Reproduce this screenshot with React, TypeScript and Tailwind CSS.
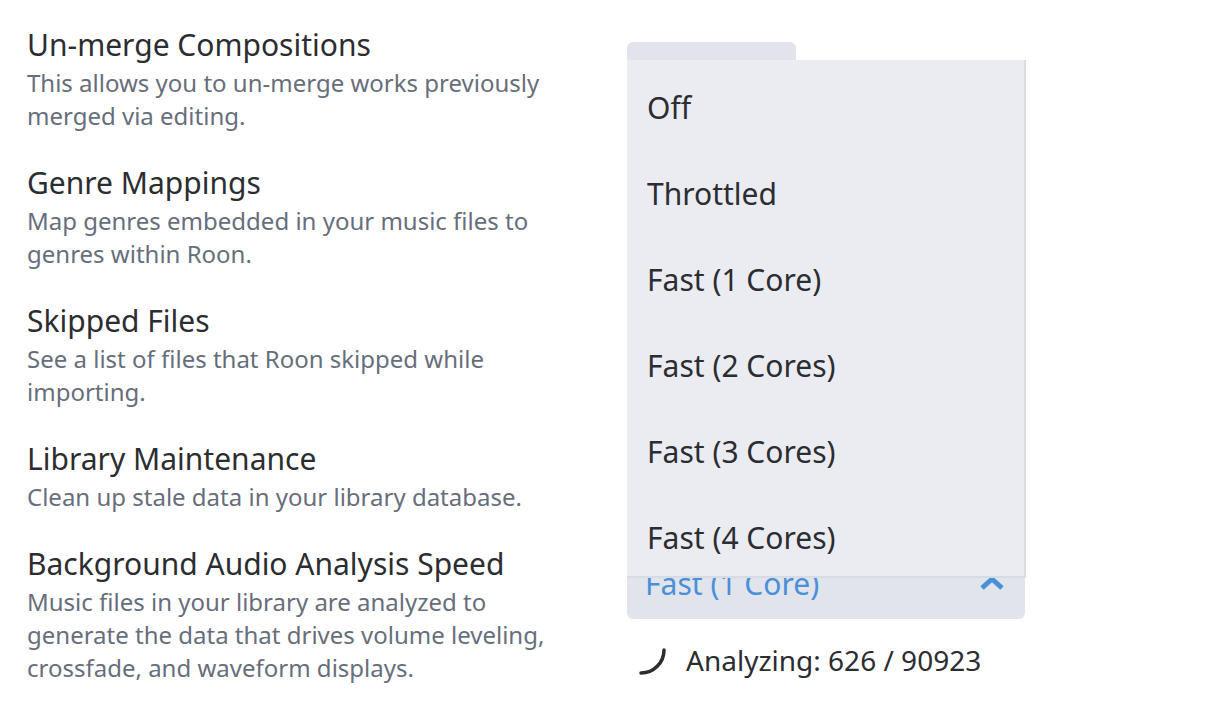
const SECTIONS: { title: string; desc: string }[] = [
  { title: "Un-merge Compositions", desc: "This allows you to un-merge works previously merged via editing." },
  { title: "Genre Mappings", desc: "Map genres embedded in your music files to genres within Roon." },
  { title: "Skipped Files", desc: "See a list of files that Roon skipped while importing." },
  { title: "Library Maintenance", desc: "Clean up stale data in your library database." },
  {
    title: "Background Audio Analysis Speed",
    desc: "Music files in your library are analyzed to generate the data that drives volume leveling, crossfade, and waveform displays.",
  },
];

const OPTIONS = ["Off", "Throttled", "Fast (1 Core)", "Fast (2 Cores)", "Fast (3 Cores)", "Fast (4 Cores)"];

export default function App() {
  return (
    <div
      className="relative w-[1206px] h-[718px] overflow-hidden bg-white"
      style={{ fontFamily: '"Noto Sans", "Open Sans", sans-serif' }}
    >
      <div className="pl-[27px] pt-[26px] flex flex-col gap-[32px]">
        {SECTIONS.map((s, i) => (
          <div key={s.title} className="grid grid-cols-[600px_398px]">
            <div className="w-[530px]">
              <div className="text-[30px] leading-[38px] text-[#2b2d31]">{s.title}</div>
              <div className="mt-[2px] text-[24px] leading-[33px] text-[#676e7b]">{s.desc}</div>
            </div>
            <div>
              {i === 0 && <div className="mt-[16px] w-[169px] h-[40px] rounded-[6px] bg-[#e1e4eb]" />}
              {i === 4 && (
                <>
                  <div className="mt-[2px] h-[72px] rounded-[6px] bg-[#e1e4eb] flex items-center justify-between pl-[18px] pr-[20px]">
                    <span className="text-[30px] text-[#4a90d9]">Fast (1 Core)</span>
                    <svg width="26" height="16" viewBox="0 0 26 16">
                      <path d="M3 13 L13 4 L23 13" fill="none" stroke="#4a90d9" strokeWidth="5" strokeLinejoin="miter" />
                    </svg>
                  </div>
                  <div className="mt-[24px] flex items-center gap-[18px] pl-[11px]">
                    <svg width="30" height="32" viewBox="0 0 30 32">
                      <path d="M3 29 A 23 23 0 0 0 26 6" fill="none" stroke="#2b2d31" strokeWidth="3.5" strokeLinecap="round" />
                    </svg>
                    <span className="text-[28px] leading-[34px] text-[#2b2d31]">Analyzing: 626 / 90923</span>
                  </div>
                </>
              )}
            </div>
          </div>
        ))}
      </div>

      {/* open dropdown menu overlay */}
      <div className="absolute left-[627px] top-[60px] w-[399px] h-[518px] bg-[#eaecf1] border-r-2 border-b-2 border-[#d7dbe3] overflow-hidden pt-[4px]">
        {OPTIONS.map((o) => (
          <div key={o} className="h-[86px] flex items-center pl-[20px] text-[30px] text-[#2b2d31]">
            {o}
          </div>
        ))}
      </div>
    </div>
  );
}
